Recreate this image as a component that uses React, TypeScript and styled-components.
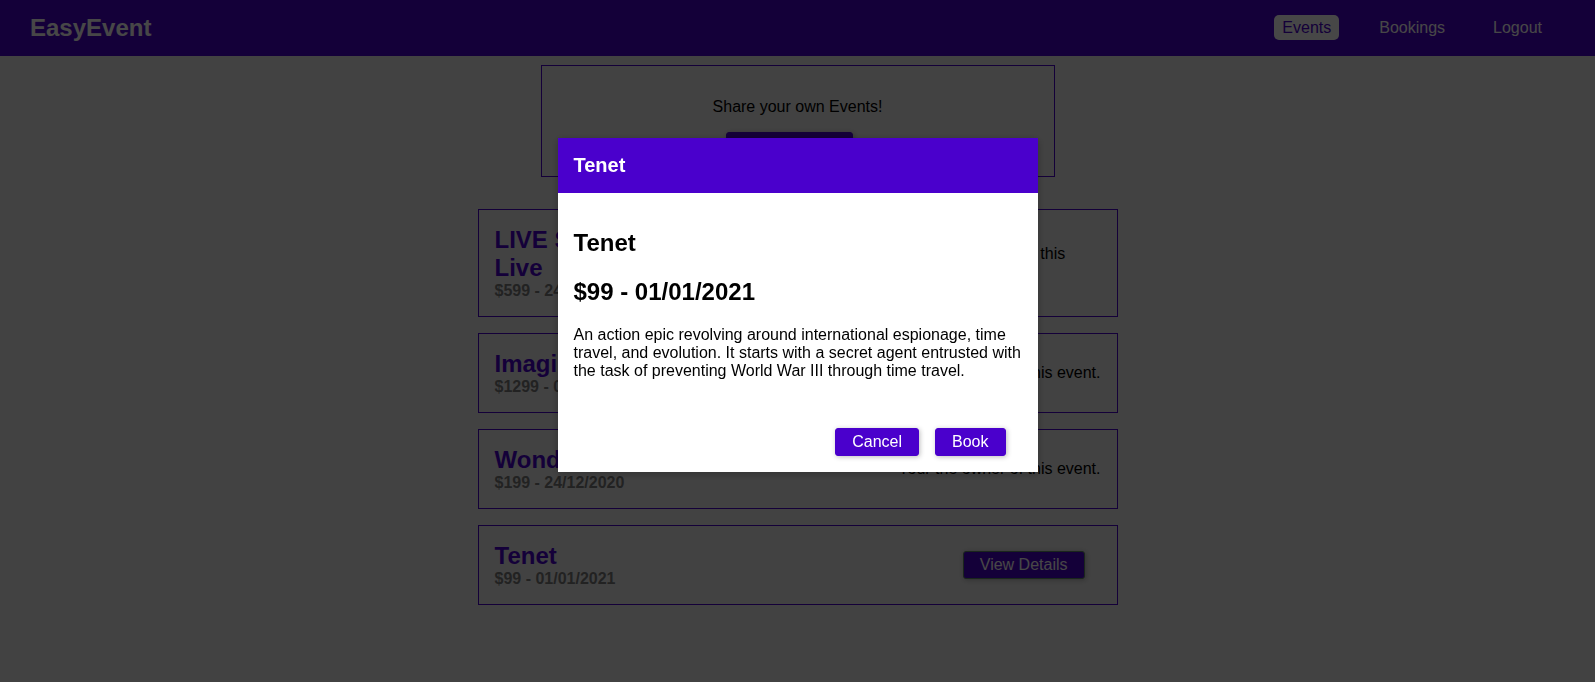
import React from "react";
import styled, { createGlobalStyle } from "styled-components";

const THEME = "#4a00cc";

const GlobalStyle = createGlobalStyle`
  html, body {
    margin: 0;
    padding: 0;
    background: #ececec;
  }
  body {
    font-family: "Liberation Sans", Helvetica, Arial, sans-serif;
    font-size: 16px;
    color: #000;
  }
  * { box-sizing: content-box; }
`;

const NavBar = styled.header`
  height: 56px;
  background: ${THEME};
  padding: 0 29px 0 30px;
  display: flex;
  align-items: center;
  justify-content: space-between;
`;

const Logo = styled.h1`
  margin: 0;
  font-size: 24px;
  font-weight: bold;
  color: #fff;
`;

const NavList = styled.ul`
  display: flex;
  list-style: none;
  margin: 0;
  padding: 0;
`;

const NavItem = styled.li`
  margin: 0 16px;
`;

const NavLink = styled.a<{ $active?: boolean }>`
  text-decoration: none;
  padding: 4px 8px;
  border-radius: 5px;
  color: ${(p) => (p.$active ? THEME : "#fff")};
  background: ${(p) => (p.$active ? "#fff" : "transparent")};
  cursor: pointer;
`;

const Main = styled.main`
  padding: 9px 40px 0;
`;

const Controls = styled.div`
  text-align: center;
  border: 1px solid ${THEME};
  padding: 16px;
  margin: 0 auto;
  width: 480px;
  max-width: 80%;
`;

const ControlText = styled.p`
  margin: 16px 0;
`;

const Button = styled.button<{ $edge?: string }>`
  background: ${THEME};
  font: inherit;
  border: 1px solid ${(p) => p.$edge || THEME};
  border-radius: 3px;
  padding: 4px 16px;
  margin-right: 16px;
  box-shadow: 1px 1px 5px rgba(0, 0, 0, 0.26);
  color: #fff;
  cursor: pointer;
`;

const EventList = styled.ul`
  width: 640px;
  max-width: 90%;
  margin: 32px auto;
  list-style: none;
  padding: 0;
`;

const EventItem = styled.li`
  margin: 16px 0;
  padding: 16px;
  border: 1px solid ${THEME};
  display: flex;
  justify-content: space-between;
  align-items: center;
`;

const EventTitle = styled.h1`
  margin: 0;
  font-size: 24px;
  color: ${THEME};
`;

const EventMeta = styled.h2`
  margin: 0;
  font-size: 16px;
  color: #7a7a7a;
`;

const OwnerNote = styled.p`
  margin: 0;
`;

const Backdrop = styled.div`
  position: fixed;
  inset: 0;
  background: rgba(0, 0, 0, 0.72);
`;

const Modal = styled.div`
  position: fixed;
  top: calc(20vh + 2px);
  left: calc((100% - 480px) / 2);
  width: 480px;
  background: #fff;
  box-shadow: 0 2px 8px rgba(0, 0, 0, 0.26);
`;

const ModalHeader = styled.header`
  padding: 16px;
  background: ${THEME};
  color: #fff;
`;

const ModalHeading = styled.h1`
  margin: 0;
  font-size: 20px;
`;

const ModalContent = styled.section`
  padding: 16px;
`;

const ModalTitle = styled.h1`
  font-size: 24px;
  margin: 19.92px 0;
`;

const ModalSubtitle = styled.h2`
  font-size: 24px;
  margin: 20.5px 0;
`;

const ModalText = styled.p`
  margin: 16px 0;
`;

const ModalActions = styled.section`
  display: flex;
  justify-content: flex-end;
  padding: 16px;
`;

type Ev = { title: string; meta: string; own: boolean };

const events: Ev[] = [
  { title: "LIVE Stream: Coldplay World Tour Live", meta: "$599 - 24/10/2020", own: true },
  { title: "Imagine Dragons Concert", meta: "$1299 - 05/11/2020", own: true },
  { title: "Wonder Woman 1984", meta: "$199 - 24/12/2020", own: true },
  { title: "Tenet", meta: "$99 - 01/01/2021", own: false },
];

export default function App() {
  return (
    <>
      <GlobalStyle />
      <NavBar>
        <Logo>EasyEvent</Logo>
        <nav>
          <NavList>
            <NavItem>
              <NavLink $active>Events</NavLink>
            </NavItem>
            <NavItem>
              <NavLink>Bookings</NavLink>
            </NavItem>
            <NavItem>
              <NavLink>Logout</NavLink>
            </NavItem>
          </NavList>
        </nav>
      </NavBar>
      <Main>
        <Controls>
          <ControlText>Share your own Events!</ControlText>
          <Button>Create Event</Button>
        </Controls>
        <EventList>
          {events.map((e) => (
            <EventItem key={e.title}>
              <div>
                <EventTitle>{e.title}</EventTitle>
                <EventMeta>{e.meta}</EventMeta>
              </div>
              {e.own ? (
                <OwnerNote>Your the owner of this event.</OwnerNote>
              ) : (
                <Button $edge="#5e8a64">View Details</Button>
              )}
            </EventItem>
          ))}
        </EventList>
      </Main>
      <Backdrop />
      <Modal>
        <ModalHeader>
          <ModalHeading>Tenet</ModalHeading>
        </ModalHeader>
        <ModalContent>
          <ModalTitle>Tenet</ModalTitle>
          <ModalSubtitle>$99 - 01/01/2021</ModalSubtitle>
          <ModalText>
            An action epic revolving around international espionage, time travel, and
            evolution. It starts with a secret agent entrusted with the task of preventing
            World War III through time travel.
          </ModalText>
        </ModalContent>
        <ModalActions>
          <Button>Cancel</Button>
          <Button>Book</Button>
        </ModalActions>
      </Modal>
    </>
  );
}
